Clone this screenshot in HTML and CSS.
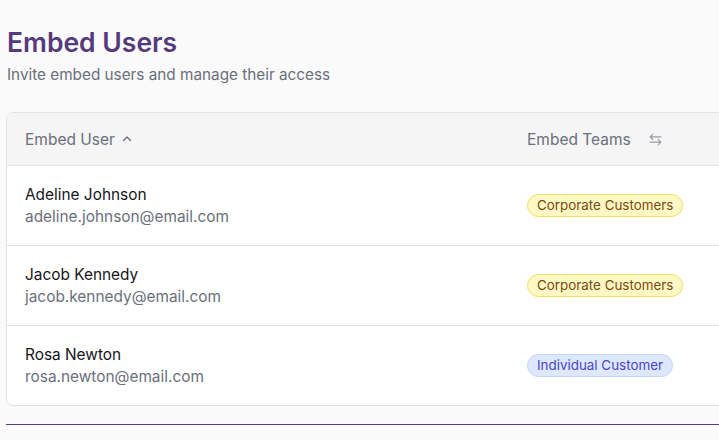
FILE: index.html
```html
<!DOCTYPE html>
<html lang="en">
<head>
  <meta charset="UTF-8">
  <title>Embed Users</title>
  <link rel="stylesheet" href="styles.css">
</head>
<body>
<div id="app">
  <h1 class="title">Embed Users</h1>
  <p class="subtitle">Invite embed users and manage their access</p>

  <div class="card">
    <div class="row head">
      <div class="cell">
        Embed User
        <svg class="sort" width="12" height="12" viewBox="0 0 12 12"><path d="M2.5 7.5 6 4l3.5 3.5" fill="none" stroke="currentColor" stroke-width="1.4" stroke-linecap="round" stroke-linejoin="round"/></svg>
      </div>
      <div class="cell">
        Embed Teams
        <svg class="swap" width="15" height="15" viewBox="0 0 14 14"><path d="M4.5 2 2 4.5 4.5 7M2 4.5h10M9.5 7 12 9.5 9.5 12M12 9.5H2" fill="none" stroke="currentColor" stroke-width="1.1" stroke-linecap="round" stroke-linejoin="round"/></svg>
      </div>
    </div>

    <div class="row">
      <div class="cell user">
        <div class="name">Adeline Johnson</div>
        <div class="email">adeline.johnson@email.com</div>
      </div>
      <div class="cell"><span class="badge yellow">Corporate Customers</span></div>
    </div>

    <div class="row">
      <div class="cell user">
        <div class="name">Jacob Kennedy</div>
        <div class="email">jacob.kennedy@email.com</div>
      </div>
      <div class="cell"><span class="badge yellow">Corporate Customers</span></div>
    </div>

    <div class="row">
      <div class="cell user">
        <div class="name">Rosa Newton</div>
        <div class="email">rosa.newton@email.com</div>
      </div>
      <div class="cell"><span class="badge blue">Individual Customer</span></div>
    </div>
  </div>

  <div class="rule"></div>
</div>
</body>
</html>
```

FILE: styles.css
```css
html, body {
  margin: 0;
  background: #fafafa;
  overflow: hidden;
}

#app {
  padding: 26px 0 0 6px;
  font-family: Inter, "Liberation Sans", sans-serif;
  width: 713px;
}

.title {
  margin: 0 0 0 1px;
  font-size: 26.5px;
  line-height: 32px;
  font-weight: 600;
  color: #553a7c;
}

.subtitle {
  margin: 7px 0 0 1px;
  font-size: 15.3px;
  line-height: 20px;
  color: #6b6f7b;
}

.card {
  margin-top: 27px;
  margin-right: -20px;
  background: #fff;
  border: 1px solid #e2e2e4;
  border-radius: 7px;
  overflow: hidden;
}

.row {
  display: grid;
  grid-template-columns: 502px 1fr;
  height: 79px;
  align-items: center;
  border-top: 1px solid #e4e4e6;
}

.row.head {
  height: 52px;
  border-top: none;
  background: #f5f5f6;
  color: #6b6f7b;
  font-size: 15.5px;
}

.cell {
  padding-left: 18px;
  display: flex;
  align-items: center;
}

.sort {
  margin-left: 6px;
  color: #6b6f7b;
}

.swap {
  margin-left: 17px;
  color: #9a9ca4;
}

.user {
  flex-direction: column;
  align-items: flex-start;
}

.name {
  font-size: 15.4px;
  line-height: 22px;
  color: #15151a;
}

.email {
  font-size: 15.4px;
  line-height: 22px;
  color: #6b6f7b;
}

.badge {
  display: inline-block;
  padding: 0 9px;
  height: 21px;
  line-height: 21px;
  border-radius: 12px;
  font-size: 13.4px;
  border: 1px solid;
}

.badge.yellow {
  background: #fdf8c4;
  border-color: #f6df5c;
  color: #7b4a12;
}

.badge.blue {
  background: #dde8fd;
  border-color: #c3d5fa;
  color: #4a46c8;
}

.rule {
  margin-top: 18px;
  margin-right: -20px;
  height: 1px;
  background: #5b3a86;
}
```
